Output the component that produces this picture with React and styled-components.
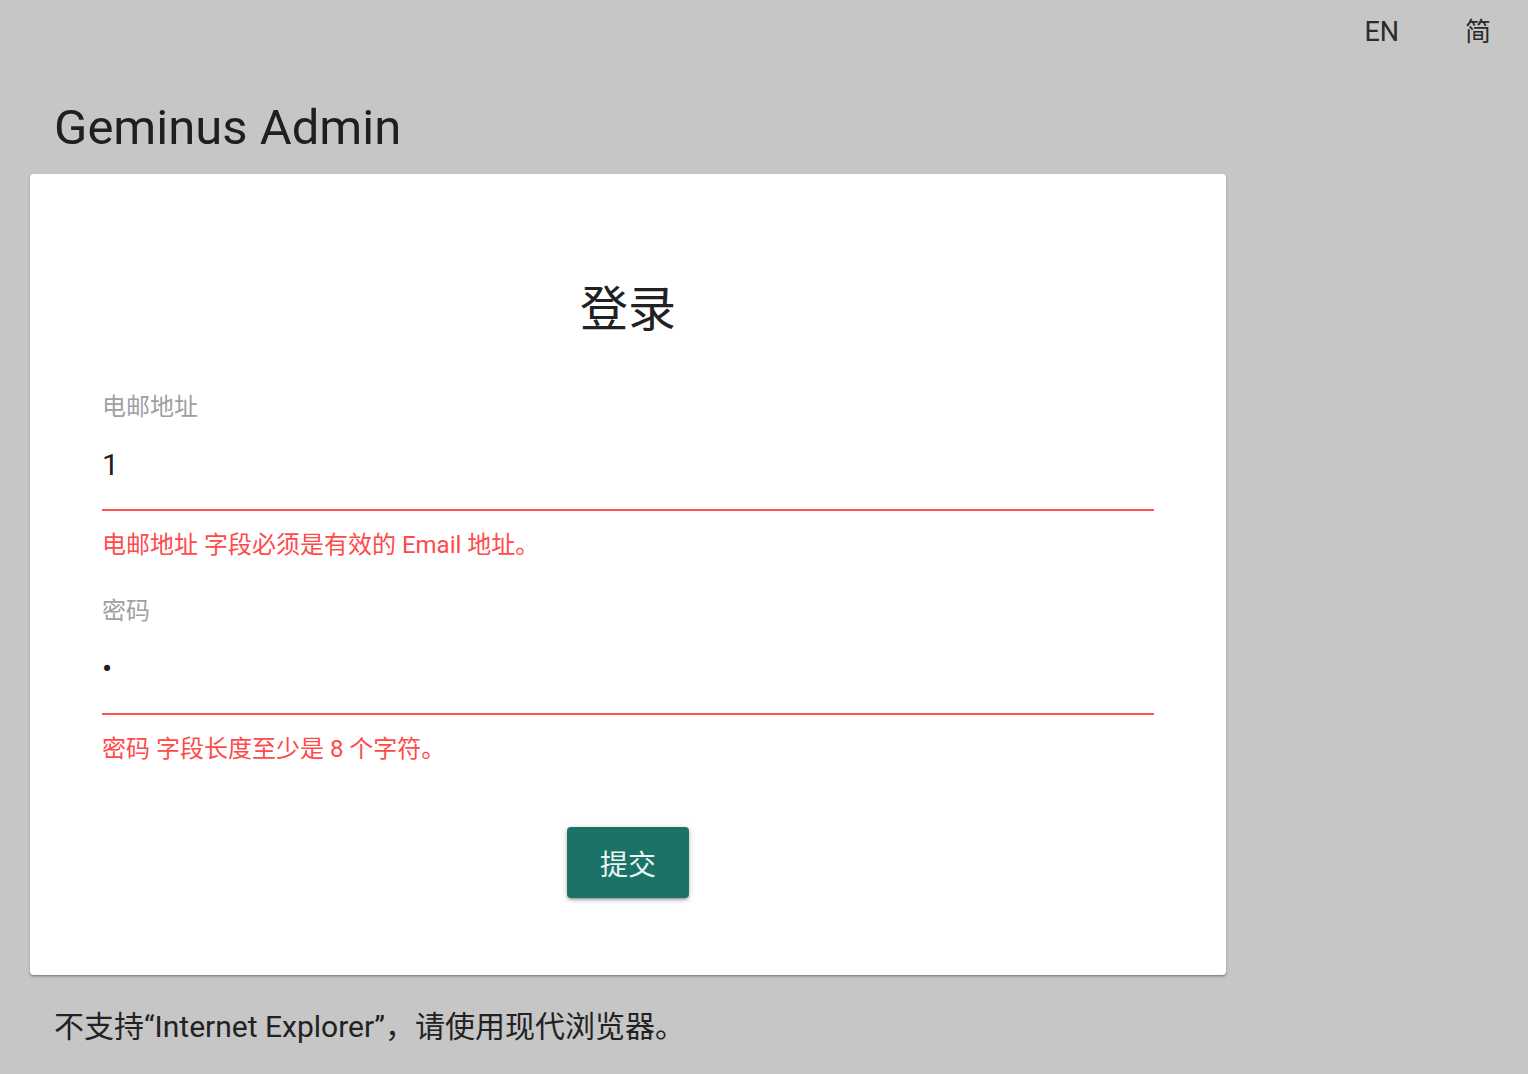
import React from "react";
import styled, { createGlobalStyle } from "styled-components";

const GlobalStyle = createGlobalStyle`
  html, body {
    margin: 0;
    padding: 0;
    background: #c6c6c6;
  }
  body {
    font-family: Roboto, "Noto Sans CJK SC", sans-serif;
    color: #212121;
  }
`;

const Page = styled.div`
  min-height: 1074px;
  display: flex;
  flex-direction: column;
`;

const TopBar = styled.div`
  height: 64px;
  display: flex;
  justify-content: flex-end;
  align-items: center;
  gap: 66px;
  padding-right: 37px;
`;

const LangButton = styled.button`
  border: none;
  background: transparent;
  padding: 0;
  font-family: Roboto, "Noto Sans CJK SC", sans-serif;
  font-size: ${(p) => (p.$cjk ? "26px" : "27px")};
  line-height: 64px;
  color: #2b2b2b;
  cursor: pointer;
`;

const Main = styled.main`
  padding-left: 30px;
  width: 1196px;
`;

const AppTitle = styled.h1`
  margin: 36px 0 18px 24px;
  font-size: 49px;
  line-height: 56px;
  font-weight: 400;
  color: #1f1f1f;
`;

const Card = styled.div`
  background: #fff;
  border-radius: 4px;
  box-shadow: 0 2px 3px rgba(0, 0, 0, 0.22), 0 1px 1px rgba(0, 0, 0, 0.14);
  padding: 100px 72px 77px;
  display: flex;
  flex-direction: column;
`;

const CardTitle = styled.h2`
  margin: 0 0 46px;
  text-align: center;
  font-size: 48px;
  line-height: 72px;
  font-weight: 400;
  color: #212121;
`;

const Field = styled.div`
  display: flex;
  flex-direction: column;
  margin-bottom: ${(p) => (p.$last ? "0" : "36px")};
`;

const Label = styled.label`
  font-size: 24px;
  line-height: 30px;
  color: #a0a0a0;
`;

const Input = styled.input`
  display: block;
  box-sizing: border-box;
  width: 100%;
  height: 70px;
  margin-top: 19px;
  padding: 0 0 22px;
  border: none;
  border-bottom: 2px solid ${(p) => (p.$error ? "#ff5252" : "#9e9e9e")};
  outline: none;
  background: transparent;
  font-family: Roboto, "Noto Sans CJK SC", sans-serif;
  font-size: 30px;
  line-height: 48px;
  color: #212121;
`;

const ErrorText = styled.div`
  margin-top: 19px;
  font-size: 24px;
  line-height: 30px;
  color: #ff4a4a;
`;

const Actions = styled.div`
  display: flex;
  justify-content: center;
  margin-top: 63px;
`;

const SubmitButton = styled.button`
  width: 122px;
  height: 71px;
  border: none;
  border-radius: 4px;
  background: #1b7367;
  color: #eaf6f3;
  font-family: Roboto, "Noto Sans CJK SC", sans-serif;
  font-size: 28px;
  cursor: pointer;
  box-shadow: 0 3px 2px -2px rgba(0, 0, 0, 0.25), 0 2px 4px rgba(0, 0, 0, 0.2),
    0 1px 7px rgba(0, 0, 0, 0.12);
`;

const Footer = styled.p`
  margin: 32px 0 0 24px;
  font-size: 30px;
  line-height: 40px;
  color: #222;
`;

export default function App() {
  return (
    <>
      <GlobalStyle />
      <Page>
        <TopBar>
          <LangButton>EN</LangButton>
          <LangButton $cjk>简</LangButton>
        </TopBar>
        <Main>
          <AppTitle>Geminus Admin</AppTitle>
          <Card>
            <CardTitle>登录</CardTitle>
            <Field>
              <Label>电邮地址</Label>
              <Input type="text" value="1" readOnly $error />
              <ErrorText>电邮地址 字段必须是有效的 Email 地址。</ErrorText>
            </Field>
            <Field $last>
              <Label>密码</Label>
              <Input type="password" value="1" readOnly $error />
              <ErrorText>密码 字段长度至少是 8 个字符。</ErrorText>
            </Field>
            <Actions>
              <SubmitButton>提交</SubmitButton>
            </Actions>
          </Card>
          <Footer>不支持“Internet Explorer”，请使用现代浏览器。</Footer>
        </Main>
      </Page>
    </>
  );
}
